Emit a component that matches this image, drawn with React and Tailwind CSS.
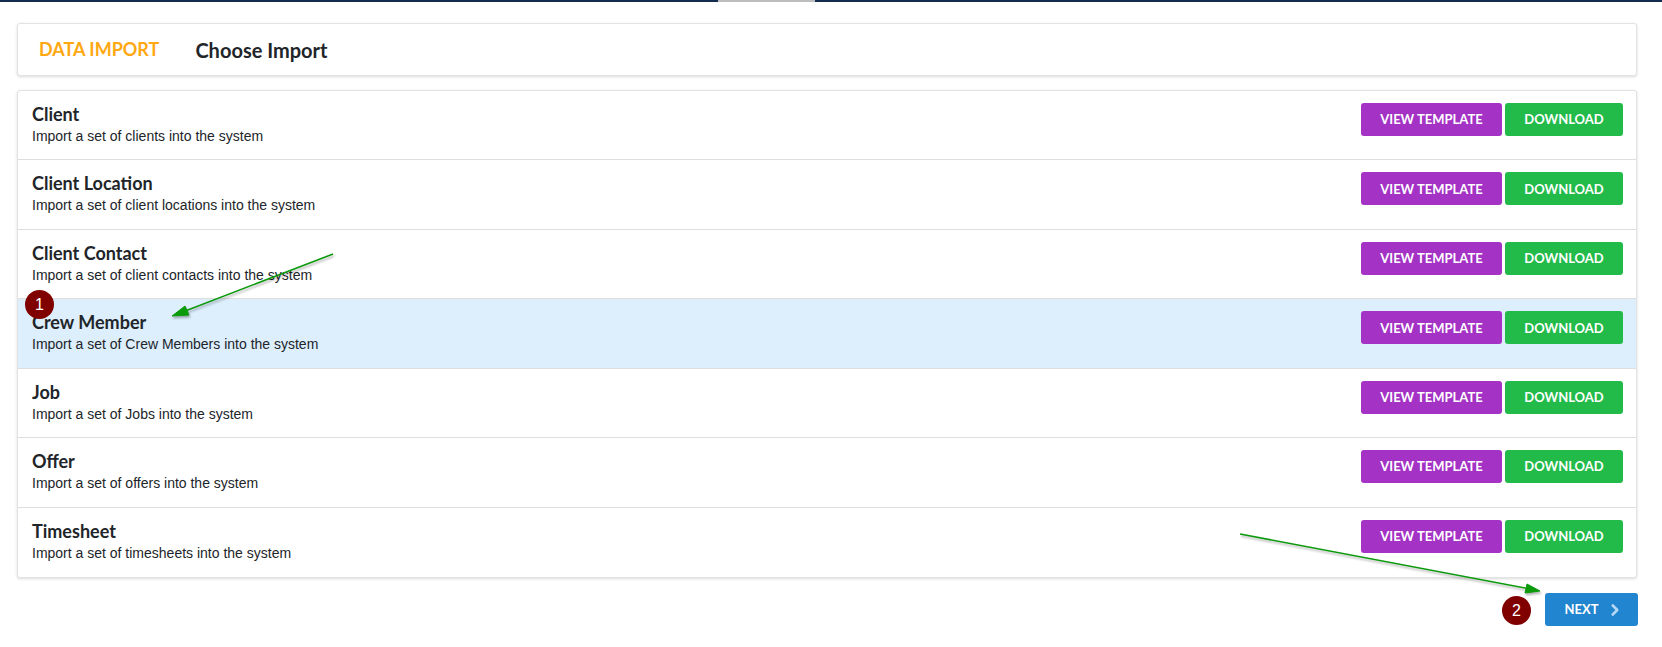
import { ChevronRight } from 'lucide-react';

const imports = [
  { name: 'Client', desc: 'Import a set of clients into the system' },
  { name: 'Client Location', desc: 'Import a set of client locations into the system' },
  { name: 'Client Contact', desc: 'Import a set of client contacts into the system' },
  { name: 'Crew Member', desc: 'Import a set of Crew Members into the system', active: true },
  { name: 'Job', desc: 'Import a set of Jobs into the system' },
  { name: 'Offer', desc: 'Import a set of offers into the system' },
  { name: 'Timesheet', desc: 'Import a set of timesheets into the system' },
];

function ImportRow({ item, last }) {
  return (
    <div
      className={`flex h-[69.45px] items-start justify-between pl-[14px] pr-[13px] pt-[12px] ${last ? '' : 'border-b border-[#dedede]'} ${item.active ? 'bg-[#ddeefd]' : ''}`}
    >
      <div>
        <div className="text-[18px] leading-[22px] font-bold text-[#212529] font-['Lato',sans-serif]">{item.name}</div>
        <div className="mt-[2px] text-[14px] leading-[19px] text-[#212529] font-['Liberation_Sans',sans-serif]">{item.desc}</div>
      </div>
      <div className="flex gap-[3px]">
        <button className="h-[33px] w-[141px] rounded-[3px] pt-[1px] bg-[#a332c5] text-[13px] font-bold text-white font-['Lato',sans-serif]">VIEW TEMPLATE</button>
        <button className="h-[33px] w-[118px] rounded-[3px] pt-[1px] bg-[#22bb4a] text-[13px] font-bold text-white font-['Lato',sans-serif]">DOWNLOAD</button>
      </div>
    </div>
  );
}

function Badge({ n, className }) {
  return (
    <div className={`absolute flex h-[29px] w-[29px] items-center justify-center rounded-full bg-[#800000] text-[16px] text-white font-['Liberation_Sans',sans-serif] ${className}`}>
      {n}
    </div>
  );
}

export default function App() {
  return (
    <div className="relative h-[647px] w-[1662px] overflow-hidden bg-white">
      {/* top nav strip */}
      <div className="flex h-[2px]">
        <div className="w-[718px] bg-[#132c50]" />
        <div className="w-[97px] bg-[#bdbdbd]" />
        <div className="flex-1 bg-[#132c50]" />
      </div>

      <div className="px-[17px] pt-[21px]">
        <div className="mr-[8px] flex h-[53px] items-center rounded-[3px] border border-[#e3e3e3] bg-white pl-[21px] shadow-[0_1px_3px_rgba(0,0,0,0.15)] font-['Lato',sans-serif]">
          <span className="text-[18px] font-bold text-[#ffa811]">DATA IMPORT</span>
          <span className="ml-[36px] text-[20px] font-bold text-[#212529]">Choose Import</span>
        </div>

        <div className="mr-[8px] mt-[14px] rounded-[3px] border border-[#e3e3e3] bg-white shadow-[0_1px_3px_rgba(0,0,0,0.15)]">
          {imports.map((item, i) => (
            <ImportRow key={item.name} item={item} last={i === imports.length - 1} />
          ))}
        </div>

        <div className="mr-[7px] mt-[15px] flex justify-end">
          <button className="flex h-[33px] w-[93px] items-center justify-center gap-[7px] rounded-[3px] pl-[5px] bg-[#2185d0] text-[13px] font-bold text-white font-['Lato',sans-serif]">
            NEXT
            <ChevronRight size={18} strokeWidth={3.5} className="text-[#b4d8f3]" />
          </button>
        </div>
      </div>

      {/* annotations */}
      <svg className="pointer-events-none absolute left-0 top-0 drop-shadow-[1px_2px_1px_rgba(0,0,0,0.3)]" width="1662" height="647">
        <g fill="#0b9a0b" stroke="#0b9a0b">
          <line x1="333" y1="254" x2="180" y2="313" strokeWidth="1.5" />
          <polygon points="172,316 185,306 189,315" strokeWidth="1" />
          <line x1="1240" y1="534" x2="1530" y2="589" strokeWidth="1.5" />
          <polygon points="1540,591 1527,584 1525,593" strokeWidth="1" />
        </g>
      </svg>
      <Badge n="1" className="left-[25px] top-[290px]" />
      <Badge n="2" className="left-[1502px] top-[596px]" />
    </div>
  );
}
